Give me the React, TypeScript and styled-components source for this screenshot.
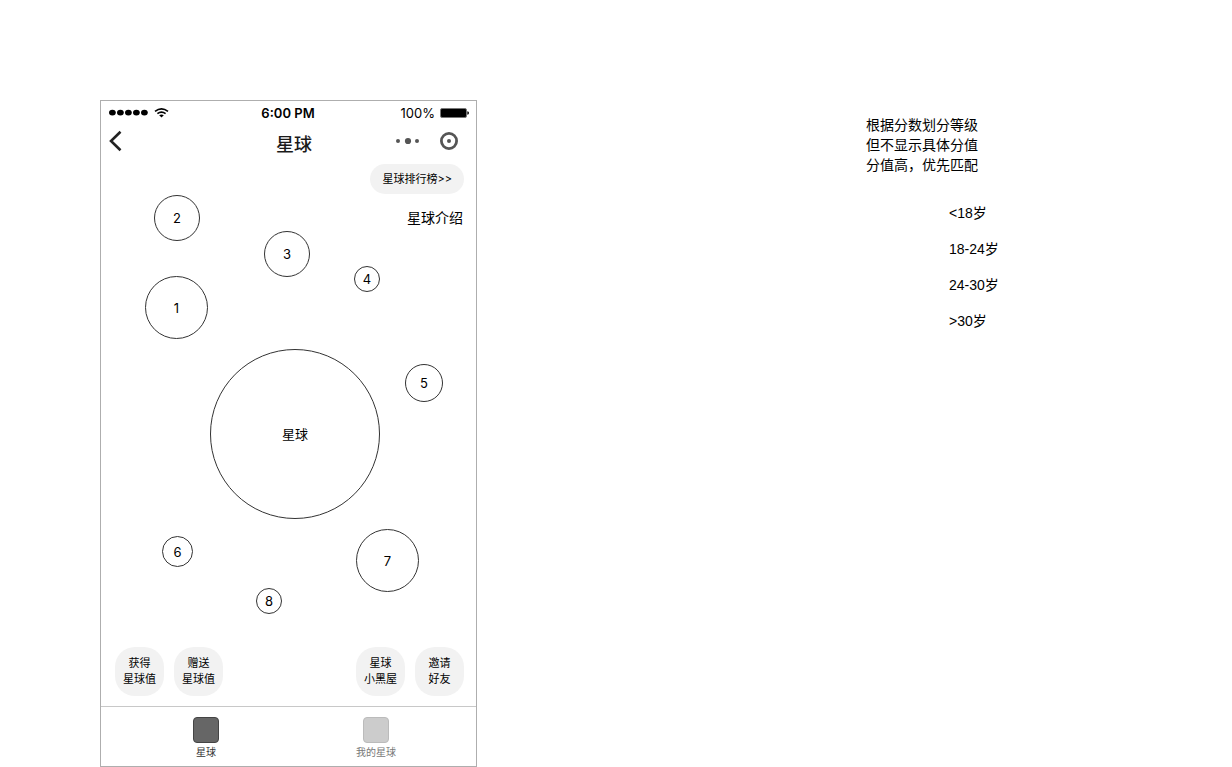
import React from "react";
import styled, { createGlobalStyle } from "styled-components";

const GlobalStyle = createGlobalStyle`
  *, *::before, *::after { box-sizing: border-box; }
  body {
    margin: 0;
    background: #fff;
    color: #000;
    font-family: "Liberation Sans", "Noto Sans CJK SC", sans-serif;
    font-size: 14px;
    line-height: 20px;
  }
  button { font: inherit; color: inherit; border: 0; padding: 0; background: none; cursor: pointer; }
  h1, p, ul { margin: 0; padding: 0; }
`;

const Page = styled.main`
  display: flex;
  justify-content: space-between;
  align-items: flex-start;
  padding: 100px 232px 0 100px;
`;

const Phone = styled.section`
  display: flex;
  flex-direction: column;
  flex: 0 0 auto;
  width: 377px;
  border: 1px solid #aeaeae;
`;

const StatusBar = styled.div`
  display: grid;
  grid-template-columns: 1fr auto 1fr;
  align-items: center;
  height: 24px;
  padding: 0 7px 0 8px;
  font-family: Inter, sans-serif;
  font-size: 13px;
`;

const Clock = styled.time`
  padding-right: 2px;
  font-weight: 600;
`;

const Battery = styled.span`
  display: flex;
  align-items: center;
  justify-content: flex-end;
  gap: 5px;
  font-size: 13px;
`;

const Icon = styled.svg`
  display: block;
`;

const TitleBar = styled.header`
  display: grid;
  grid-template-columns: 1fr auto 1fr;
  align-items: start;
  height: 36px;
  padding: 0 18px 0 7px;
`;

const BackButton = styled.button`
  && {
    padding-top: 5px;
  }
`;

const Title = styled.h1`
  padding: 8px 0 0 22px;
  font-size: 18px;
  line-height: 24px;
  font-weight: 500;
  color: #1a1a1a;
`;

const TitleActions = styled.div`
  display: flex;
  justify-content: flex-end;
  align-items: center;
  gap: 20px;
  height: 32px;
`;

const Galaxy = styled.div`
  position: relative;
  display: flex;
  flex-direction: column;
  align-items: flex-end;
  gap: 14px;
  height: 486px;
  padding: 3px 12px 0 0;
`;

const RankButton = styled.button`
  && {
    padding: 0 12px;
    height: 30px;
    border-radius: 15px;
    background: #f2f2f2;
    font-family: Inter, "Noto Sans CJK SC", sans-serif;
    font-size: 11px;
    line-height: 30px;
  }
`;

const IntroLink = styled.a`
  padding-right: 1px;
  color: #000;
  text-decoration: none;
`;

const Planet = styled.button<{ $x: number; $y: number; $size: number }>`
  && {
    position: absolute;
    left: ${(p) => p.$x}px;
    top: ${(p) => p.$y}px;
    width: ${(p) => p.$size}px;
    height: ${(p) => p.$size}px;
    border: 1px solid #333;
    border-radius: 50%;
    font-family: Inter, "Noto Sans CJK SC", sans-serif;
    font-size: 13px;
  }
`;

const Actions = styled.div`
  display: flex;
  gap: 10px;
  padding: 0 12px 10px 14px;
`;

const ActionButton = styled.button<{ $pushed?: boolean }>`
  && {
    width: 49px;
    height: 49px;
    margin-left: ${(p) => (p.$pushed ? "auto" : "0")};
    padding-bottom: 1px;
    border-radius: 20px;
    background: #f2f2f2;
    font-size: 11px;
    line-height: 16px;
    white-space: pre-line;
  }
`;

const TabBar = styled.nav`
  display: grid;
  grid-template-columns: 1fr 1fr;
  height: 60px;
  padding: 0 15px 0 20px;
  border-top: 1px solid #c8c8c8;
`;

const Tab = styled.button<{ $active?: boolean }>`
  && {
    display: flex;
    flex-direction: column;
    align-items: center;
    gap: 2px;
    padding-top: 10px;
    font-size: 10px;
    line-height: 16px;
    color: ${(p) => (p.$active ? "#333" : "#777")};
  }
`;

const TabMark = styled.span<{ $active?: boolean }>`
  width: 26px;
  height: 26px;
  border: 1px solid ${(p) => (p.$active ? "#444" : "#bbb")};
  border-radius: 4px;
  background: ${(p) => (p.$active ? "#666" : "#ccc")};
`;

const Notes = styled.aside`
  width: 134px;
  padding-top: 15px;
`;

const AgeList = styled.ul`
  display: flex;
  flex-direction: column;
  gap: 16px;
  padding: 28px 0 0 83px;
  list-style: none;
  white-space: nowrap;
`;

const planets = [
  { name: "2", x: 53, y: 34, size: 46 },
  { name: "3", x: 163, y: 70, size: 46 },
  { name: "4", x: 253, y: 105, size: 26 },
  { name: "1", x: 44, y: 115, size: 63 },
  { name: "5", x: 304, y: 203, size: 38 },
  { name: "星球", x: 109, y: 188, size: 170 },
  { name: "6", x: 61, y: 375, size: 31 },
  { name: "7", x: 255, y: 368, size: 63 },
  { name: "8", x: 155, y: 427, size: 26 },
];

const actions = [
  { text: "获得\n星球值" },
  { text: "赠送\n星球值" },
  { text: "星球\n小黑屋", pushed: true },
  { text: "邀请\n好友" },
];

export default function App() {
  return (
    <>
      <GlobalStyle />
      <Page>
        <Phone>
          <StatusBar>
            <Icon width="62" height="12" viewBox="0 0 62 12" aria-hidden="true">
              {[3, 11, 19, 27, 35].map((x) => (
                <ellipse key={x} cx={x + 0.4} cy="5.6" rx="3.4" ry="2.9" />
              ))}
              <g fill="none" stroke="#000" strokeWidth="1.6">
                <path d="M46 4.4Q52.5 -0.6 59 4.4" />
                <path d="M48.4 6.7Q52.5 3.5 56.6 6.7" />
              </g>
              <path d="M50.2 8.2Q52.5 6.8 54.8 8.2L52.5 10.4Z" />
            </Icon>
            <Clock>6:00 PM</Clock>
            <Battery>
              100%
              <Icon width="29" height="10" viewBox="0 0 29 10" aria-hidden="true">
                <rect x="0.5" y="0.5" width="26" height="9" rx="1.5" fill="#000" stroke="#777" />
                <path d="M27.3 3.2Q29 3.5 29 5T27.3 6.8Z" />
              </Icon>
            </Battery>
          </StatusBar>
          <TitleBar>
            <BackButton aria-label="返回">
              <Icon width="14" height="22" viewBox="0 0 14 22" aria-hidden="true">
                <path d="M12.5 1.7L3 11L12.5 20.3" fill="none" stroke="#222" strokeWidth="2.6" />
              </Icon>
            </BackButton>
            <Title>星球</Title>
            <TitleActions>
              <button aria-label="更多">
                <Icon width="24" height="18" viewBox="0 0 24 18" fill="#555" aria-hidden="true">
                  <circle cx="2" cy="9" r="2" />
                  <circle cx="12" cy="9" r="3.1" />
                  <circle cx="21" cy="9" r="2" />
                </Icon>
              </button>
              <button aria-label="关闭">
                <Icon width="18" height="18" viewBox="0 0 18 18" aria-hidden="true">
                  <circle cx="9" cy="9" r="7.6" fill="none" stroke="#555" strokeWidth="2.8" />
                  <circle cx="9" cy="9" r="2" fill="#555" />
                </Icon>
              </button>
            </TitleActions>
          </TitleBar>
          <Galaxy>
            <RankButton>星球排行榜&gt;&gt;</RankButton>
            <IntroLink href="#intro">星球介绍</IntroLink>
            {planets.map((p) => (
              <Planet key={p.name} $x={p.x} $y={p.y} $size={p.size}>
                {p.name}
              </Planet>
            ))}
          </Galaxy>
          <Actions>
            {actions.map((a) => (
              <ActionButton key={a.text} $pushed={a.pushed}>
                {a.text}
              </ActionButton>
            ))}
          </Actions>
          <TabBar>
            <Tab $active>
              <TabMark $active />
              星球
            </Tab>
            <Tab>
              <TabMark />
              我的星球
            </Tab>
          </TabBar>
        </Phone>
        <Notes>
          <p>
            根据分数划分等级
            <br />
            但不显示具体分值
            <br />
            分值高，优先匹配
          </p>
          <AgeList>
            <li>&lt;18岁</li>
            <li>18-24岁</li>
            <li>24-30岁</li>
            <li>&gt;30岁</li>
          </AgeList>
        </Notes>
      </Page>
    </>
  );
}
